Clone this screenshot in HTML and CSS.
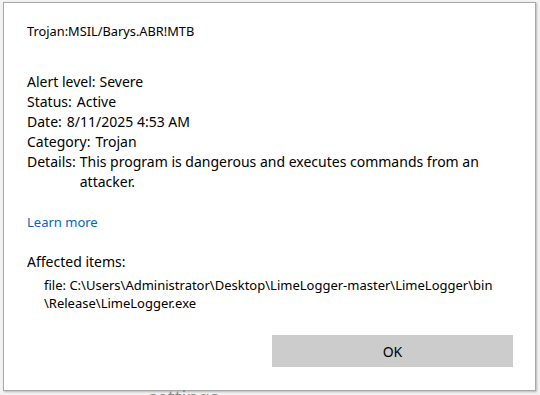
FILE: index.html
```html
<!DOCTYPE html>
<html>
<head>
	<title>Threat details</title>
	<link rel="stylesheet" href="styles.css">
</head>
<body>
   <div class="dialog">
      <div class="threat">Trojan:MSIL/Barys.ABR!MTB</div>
      <div class="facts">
         <div class="row"><span class="key">Alert level:</span><span class="val">Severe</span></div>
         <div class="row"><span class="key">Status:</span><span class="val">Active</span></div>
         <div class="row"><span class="key">Date:</span><span class="val">8/11/2025 4:53 AM</span></div>
         <div class="row"><span class="key">Category:</span><span class="val">Trojan</span></div>
         <div class="row"><span class="key">Details:</span><span class="val">This program is dangerous and executes commands from an attacker.</span></div>
      </div>
      <a class="learn" href="#">Learn more</a>
      <div class="affected">Affected items:</div>
      <div class="items">
         <div class="item">file: C:\Users\Administrator\Desktop\LimeLogger-master\LimeLogger\bin \Release\LimeLogger.exe</div>
      </div>
      <div class="actions">
         <button class="ok">OK</button>
      </div>
   </div>
   <div class="behind">settings</div>
</body>
</html>
```

FILE: styles.css
```css
html,body{
	margin: 0;
	padding: 0;
	height: 100%;
	overflow: hidden;
}
body{
	background: #f3f3f3;
	font-family: "Noto Sans", "Open Sans", sans-serif;
	color: #000;
	padding: 2px 0 0 3px;
	box-sizing: border-box;
}
.dialog{
	width: 533px;
	height: 389px;
	box-sizing: border-box;
	background: #fff;
	border: 1px solid #a8a8a8;
	box-shadow: 1px 1px 2px rgba(0,0,0,0.25);
	padding: 20px 22px 0 23px;
	display: flex;
	flex-direction: column;
}
.threat{
	font-size: 12.8px;
	line-height: 16px;
}
.facts{
	margin-top: 33px;
	font-size: 14px;
	line-height: 20px;
}
.row{
	display: flex;
}
.key{
	white-space: nowrap;
	margin-right: 5px;
}
.row:first-child .key{
	margin-right: 4px;
}
.row:last-child .key{
	margin-right: 4px;
}
.val{
	width: 420px;
}
.learn{
	margin-top: 20px;
	font-size: 13px;
	line-height: 20px;
	color: #0067c0;
	text-decoration: none;
}
.affected{
	margin-top: 20px;
	font-size: 14px;
	line-height: 20px;
}
.items{
	padding-left: 17px;
	margin-top: 4px;
	font-size: 13px;
	line-height: 18px;
}
.item{
	width: 460px;
}
.actions{
	margin-top: auto;
	margin-bottom: 23px;
	display: flex;
	justify-content: flex-end;
}
.ok{
	width: 241px;
	height: 32px;
	border: none;
	background: #cccccc;
	font-family: inherit;
	font-size: 14px;
	color: #000;
}
.behind{
	margin: -3px 0 0 145px;
	font-size: 19px;
	line-height: 20px;
	color: #8a8a8a;
}
```
